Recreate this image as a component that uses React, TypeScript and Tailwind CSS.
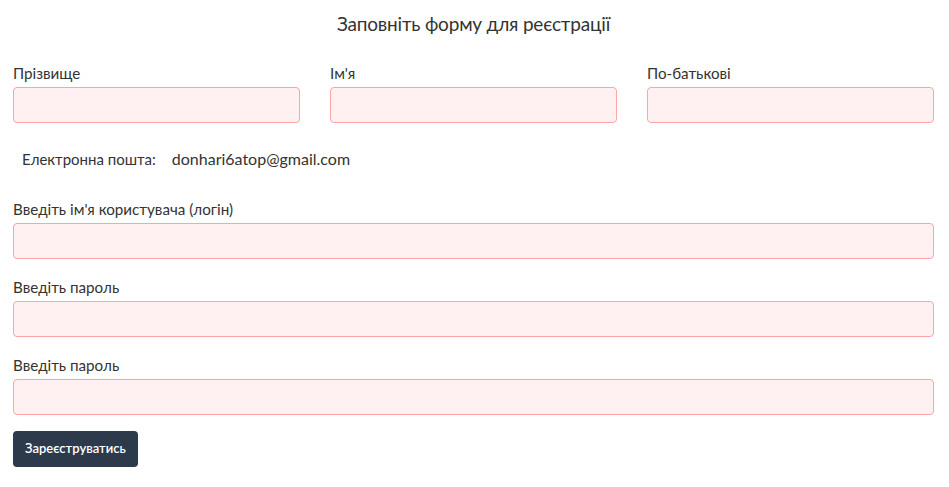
import React from "react";

const inputCls =
  "block w-full h-9 rounded border border-[#fca5a5] bg-[#fff1f1] px-3 outline-none";

const Field: React.FC<{ label: string; className?: string }> = ({ label, className }) => (
  <div className={className}>
    <label className="block text-[15.2px] leading-5 text-[#333]">{label}</label>
    <input className={`${inputCls} mt-[4px]`} />
  </div>
);

export default function App() {
  return (
    <div
      className="min-h-screen bg-white pl-[13px] pr-[15px] pt-[12px] text-[#333]"
      style={{ fontFamily: "Lato, 'Noto Sans', sans-serif" }}
    >
      <h1 className="text-center text-[19px] leading-6 tracking-[-0.2px] text-[#333]">
        Заповніть форму для реєстрації
      </h1>

      <div className="mt-[27px] grid grid-cols-3 gap-[30px]">
        <Field label="Прізвище" />
        <Field label="Ім'я" />
        <Field label="По-батькові" />
      </div>

      <div className="mt-[26px] flex pl-[9px] text-[15px] leading-5">
        <span>Електронна пошта:</span>
        <span className="ml-[16px] text-[16px]">donhari6atop@gmail.com</span>
      </div>

      <Field label="Введіть ім'я користувача (логін)" className="mt-[30px]" />
      <Field label="Введіть пароль" className="mt-[18px]" />
      <Field label="Введіть пароль" className="mt-[18px]" />

      <button className="mt-[16px] h-9 rounded bg-[#2d3a4b] px-[12px] text-[13px] font-semibold text-white">
        Зареєструватись
      </button>
    </div>
  );
}
